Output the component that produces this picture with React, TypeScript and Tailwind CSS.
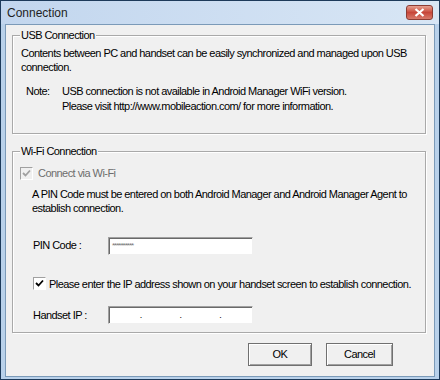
import React from "react";

const font = { fontFamily: '"Liberation Sans", Arial, sans-serif' };

function GroupBox({ label, className, children }: { label: string; className?: string; children: React.ReactNode }) {
  return (
    <div className={`relative border border-[#a9a9a9] shadow-[inset_1px_1px_0_#fff,1px_1px_0_#fff] ${className ?? ""}`}>
      <span className="absolute left-[7px] top-[-8px] bg-[#f0f0f0] px-[1px] leading-[14px] text-black">{label}</span>
      {children}
    </div>
  );
}

function CheckBox({ disabled }: { disabled?: boolean }) {
  return (
    <span
      className={`flex h-[13px] w-[13px] shrink-0 items-center justify-center border border-t-[#a0a0a0] border-l-[#a0a0a0] border-r-white border-b-white ${
        disabled ? "bg-[#f0f0f0]" : "bg-white"
      }`}
    >
      <svg width="9" height="9" viewBox="0 0 9 9">
        <path d="M1 4 L3.5 6.5 L8 1.5" fill="none" stroke={disabled ? "#a0a0a0" : "#000"} strokeWidth="1.8" />
      </svg>
    </span>
  );
}

function Field({ children }: { children?: React.ReactNode }) {
  return (
    <div className="flex h-[18px] w-[145px] items-center border border-t-[#a0a0a0] border-l-[#a0a0a0] border-r-[#f0f0f0] border-b-[#f0f0f0] bg-white shadow-[inset_1px_1px_0_#696969]">
      {children}
    </div>
  );
}

export default function App() {
  return (
    <div style={font} className="flex h-[380px] w-[440px] flex-col border border-[#1d3a5a] bg-[#b9d1ea] text-[11px] tracking-[-0.55px] whitespace-nowrap text-black">
      <div className="flex h-[23px] shrink-0 items-center justify-between bg-gradient-to-r from-[#c2d6ee] to-[#d8e6f5] pl-[6px] pr-[6px]">
        <span className="text-[12px] tracking-normal text-[#1e1e1e]">Connection</span>
        <div className="flex h-[15px] w-[27px] items-center justify-center rounded-[3px] border border-[#8c3c34] bg-gradient-to-b from-[#e6a091] via-[#c7463a] to-[#d8796b]">
          <svg width="11" height="9" viewBox="0 0 11 9">
            <path d="M1.5 1 L9.5 8 M9.5 1 L1.5 8" stroke="#fff" strokeWidth="2.2" />
          </svg>
        </div>
      </div>
      <div className="mx-[4px] mb-[2px] flex flex-1 flex-col border border-[#7b9ab8] bg-[#f0f0f0] pl-[6px] pr-[8px] pt-[10px]">
        <GroupBox label="USB Connection" className="h-[99px] pl-[8px] pt-[10px]">
          <div className="leading-[14px]">
            <div>Contents between PC and handset can be easily synchronized and managed upon USB</div>
            <div>connection.</div>
          </div>
          <div className="mt-[10px] flex pl-[5px] leading-[15px]">
            <span className="w-[36px] shrink-0">Note:</span>
            <div>
              <div>USB connection is not available in Android Manager WiFi version.</div>
              <div>Please visit http://www.mobileaction.com/ for more information.</div>
            </div>
          </div>
        </GroupBox>
        <GroupBox label="Wi-Fi Connection" className="mt-[17px] h-[182px] pl-[7px] pt-[13px]">
          <div className="flex items-center gap-[5px] text-[#6d6d6d]">
            <CheckBox disabled />
            <span>Connect via Wi-Fi</span>
          </div>
          <div className="mt-[5px] pl-[12px] leading-[14px]">
            <div>A PIN Code must be entered on both Android Manager and Android Manager Agent to</div>
            <div>establish connection.</div>
          </div>
          <div className="mt-[22px] flex items-center pl-[13px]">
            <span className="w-[75px]">PIN Code :</span>
            <Field>
              <span className="pl-[3px] text-[8px] leading-none tracking-[-1px] text-[#777]">**********</span>
            </Field>
          </div>
          <div className="mt-[21px] flex items-center gap-[3px] pl-[13px]">
            <CheckBox />
            <span>Please enter the IP address shown on your handset screen to establish connection.</span>
          </div>
          <div className="mt-[14px] flex items-center pl-[13px]">
            <span className="w-[75px]">Handset IP :</span>
            <Field>
              <div className="flex w-full justify-around px-[12px] text-[9px] leading-none">
                <span>.</span>
                <span>.</span>
                <span>.</span>
              </div>
            </Field>
          </div>
        </GroupBox>
        <div className="mt-[10px] flex justify-end gap-[14px] pr-[33px]">
          <button className="h-[23px] w-[64px] border border-[#707070] bg-[#f0f0f0] shadow-[inset_1px_1px_0_#fff,inset_-1px_-1px_0_#a0a0a0]">OK</button>
          <button className="h-[23px] w-[67px] border border-[#707070] bg-[#f0f0f0] shadow-[inset_1px_1px_0_#fff,inset_-1px_-1px_0_#a0a0a0]">Cancel</button>
        </div>
      </div>
    </div>
  );
}
